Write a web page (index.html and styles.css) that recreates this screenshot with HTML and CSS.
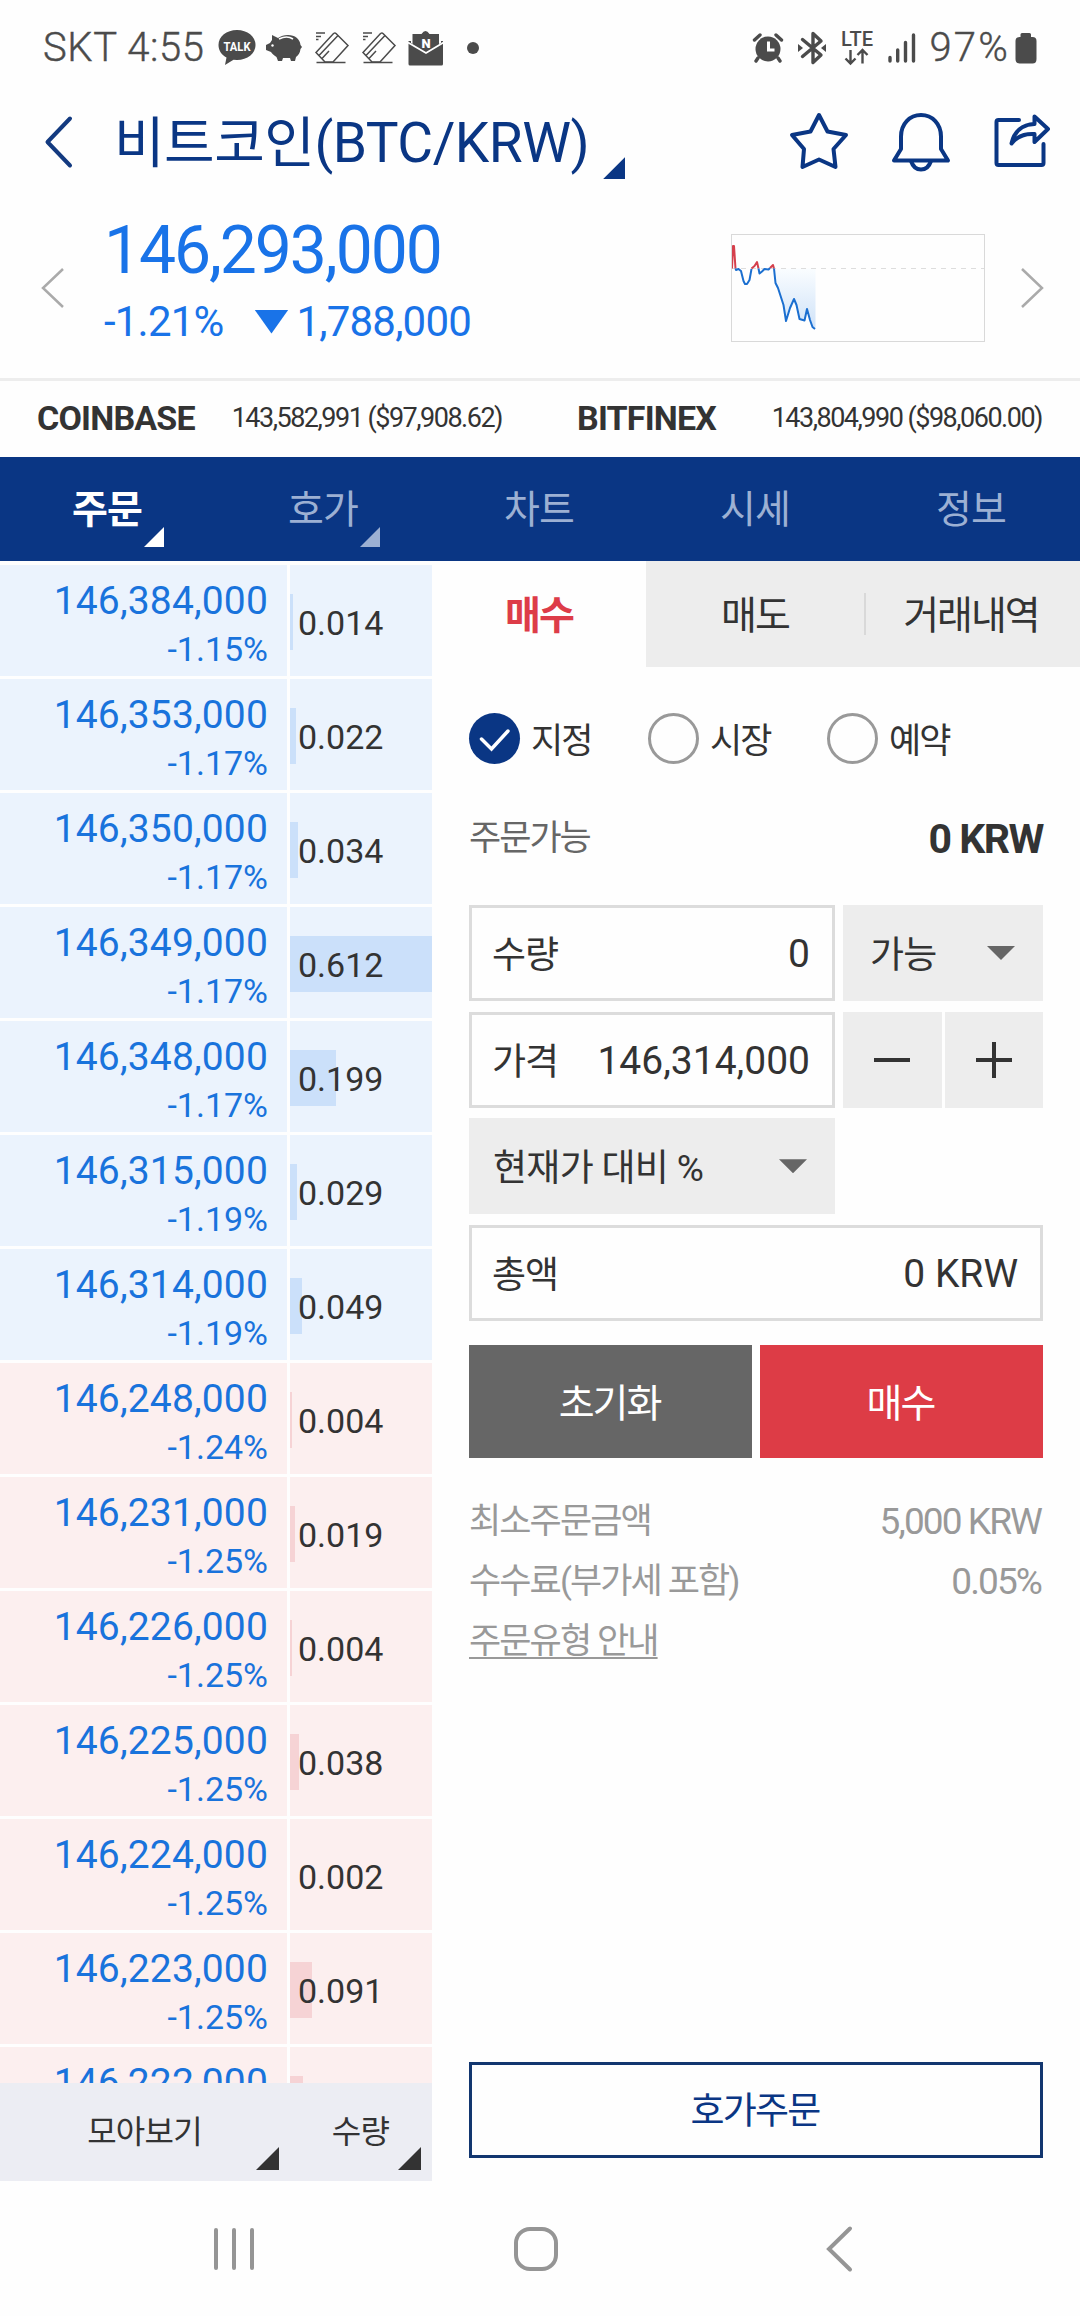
FILE: index.html
```html
<!DOCTYPE html>
<html lang="ko">
<head>
    <meta charset="utf-8">
    <title>비트코인(BTC/KRW)</title>
    <link rel="stylesheet" href="styles.css">
</head>
<body>

    <!-- Status bar -->
    <div class="status">
        <span class="carrier">SKT 4:55</span>
        <svg class="st-talk" width="38" height="36" viewBox="0 0 38 36">
            <path d="M19 0C8.500 0 .5 6.500 .5 15c0 5.500 3.300 10 8 12.600L7 35l8.500-5.300 3.500.2c10.500 0 18.500-6.500 18.500-15S29.500 0 19 0z" fill="#4b4b4b"/>
            <text x="19" y="20.500" class="talk-text" textLength="27" lengthAdjust="spacingAndGlyphs">TALK</text>
        </svg>
        <svg class="st-pig" width="38" height="28" viewBox="0 0 38 28">
            <path d="M7 1l6 3c3-2 6-3 10-3 7 0 12 4 12.500 10L37 13l-1.500 2c-.5 4-2 6-4.500 8l-1 4h-4l-1-3h-7l-1 3h-4l-1.500-4C9 21 7 20 6 18l-5-2v-5l4-2 2-3z" fill="#4b4b4b"/>
            <path d="M14 5q8-4 14 0" stroke="#fff" stroke-width="1.600" fill="none"/>
            <circle cx="7.500" cy="11.500" r="1.200" fill="#fff"/>
        </svg>
        <svg class="st-card" width="34" height="32" viewBox="0 0 34 32">
            <g fill="none" stroke="#4b4b4b" stroke-width="1.500">
                <path d="M1 1h9M1 4.500h5M1 7.500h2.500M1.500 30.500h29"/>
                <path d="M1 20.500L18.500 1.500q1.500-1 2.500 0L33 13.500 18 30h-8z"/>
                <path d="M4 23.500L23 3.500M7 26.500L14 19"/>
            </g>
        </svg>
        <svg class="st-card" width="34" height="32" viewBox="0 0 34 32">
            <g fill="none" stroke="#4b4b4b" stroke-width="1.500">
                <path d="M1 1h9M1 4.500h5M1 7.500h2.500M1.500 30.500h29"/>
                <path d="M1 20.500L18.500 1.500q1.500-1 2.500 0L33 13.500 18 30h-8z"/>
                <path d="M4 23.500L23 3.500M7 26.500L14 19"/>
            </g>
        </svg>
        <svg class="st-mail" width="36" height="36" viewBox="0 0 36 36">
            <path d="M4.500 4h9q4-6 8 0h9.500v20h-26.500z" fill="#4b4b4b"/>
            <path d="M.5 11h2.500v2l15 8.500L33 13v-2h2v23q0 1.500-1.500 1.500h-31.500q-1.500 0-1.500-1.500z" fill="#4b4b4b"/>
            <path d="M0 12.500L18 23l17.500-10.500" fill="none" stroke="#fff" stroke-width="1.800"/>
            <text x="18" y="17.500" class="mail-text">N</text>
        </svg>
        <i class="st-dot"></i>

        <div class="status-right">
            <svg width="30" height="30" viewBox="0 0 30 30">
                <circle cx="15" cy="16" r="12.500" fill="#4b4b4b"/>
                <path d="M1.500 7L7 2M28.500 7L23 2M5 25l-2 3M25 25l2 3" stroke="#4b4b4b" stroke-width="3.400" stroke-linecap="round"/>
                <path d="M15.500 8.500v8.500h6" stroke="#fff" stroke-width="3" fill="none"/>
            </svg>
            <svg class="st-bt" width="28" height="32" viewBox="0 0 28 32">
                <path d="M4.500 7.500L23 23l-8 7.500v-29L23 9 4.500 24.500" fill="none" stroke="#4b4b4b" stroke-width="3.400" stroke-linejoin="round" stroke-linecap="round"/>
                <path d="M0 12l5 4-5 4zM28 12l-5 4 5 4z" fill="#4b4b4b"/>
            </svg>
            <svg class="st-lte" width="34" height="34" viewBox="0 0 34 34">
                <text x="17" y="15" class="lte-text" textLength="32" lengthAdjust="spacingAndGlyphs">LTE</text>
                <path d="M10.500 19v13M5.500 27.500l5 5 5-5M22.500 32.500v-13M17.500 24l5-5 5 5" fill="none" stroke="#4b4b4b" stroke-width="2.400"/>
            </svg>
            <svg class="st-signal" width="28" height="30" viewBox="0 0 28 30">
                <path d="M2 24.500v3.500M9.700 17v11M17.500 9.500v18.500M25.500 2v26" stroke="#4b4b4b" stroke-width="3.400" stroke-linecap="round"/>
            </svg>
            <span class="percent">97%</span>
            <svg class="st-battery" width="22" height="31" viewBox="0 0 22 31">
                <path d="M7 0h7.500q1.500 0 1.500 1.500V4h1.500Q21.500 4 21.500 8v18q0 4.500-4 4.500H4.500q-4 0-4-4.500V8q0-4 4-4H5.500V1.500Q5.500 0 7 0z" fill="#4b4b4b"/>
            </svg>
        </div>
    </div>

    <!-- Title -->
    <div class="header">
        <svg class="back" width="30" height="54" viewBox="0 0 30 54">
            <path d="M26 3.500L3.500 27 26 50.500" fill="none" stroke="#133a80" stroke-width="4" stroke-linecap="round" stroke-linejoin="round"/>
        </svg>
        <h1 class="title">비트코인(BTC/KRW)</h1>
        <i class="corner corner-title"></i>
        <div class="header-icons">
            <svg width="60" height="60" viewBox="0 0 60 60">
                <path d="M30 4l8.500 16.500L57 24 44.500 38 46.500 56 30 48.500 13.500 56l1.500-18L3 24l18.500-3.500z" fill="none" stroke="#0a3684" stroke-width="4" stroke-linejoin="round"/>
            </svg>
            <svg width="60" height="60" viewBox="0 0 60 60">
                <path d="M10 38V25.500C10 13 18.500 4 30 4s20 9 20 21.500V38l7 11.500H3z" fill="none" stroke="#0a3684" stroke-width="4" stroke-linejoin="round"/>
                <path d="M20 50c2 6 6 8.500 10 8.500s8-2.500 10-8.500" fill="none" stroke="#0a3684" stroke-width="4"/>
            </svg>
            <svg class="share" width="60" height="60" viewBox="0 0 60 60">
                <path d="M27 9H6.500Q4.500 9 4.500 11v41q0 2 2 2h43q2 0 2-2V33" fill="none" stroke="#0a3684" stroke-width="4" stroke-linecap="round"/>
                <path d="M42.500 5.500L56 18 42.500 31v-8c-9-.5-17 1.500-23 9.500C22 21 30 13.500 42.500 13z" fill="none" stroke="#0a3684" stroke-width="4" stroke-linejoin="round"/>
            </svg>
        </div>
    </div>

    <!-- Current price -->
    <div class="ticker">
        <svg class="prev" width="22" height="40" viewBox="0 0 22 40">
            <path d="M22 1L2 20l20 19" fill="none" stroke="#aaa" stroke-width="2.500"/>
        </svg>
        <div class="price-box">
            <div class="price">146,293,000</div>
            <div class="change">
                <span class="rate">-1.21%</span>
                <i class="down"></i>
                <span class="diff">1,788,000</span>
            </div>
        </div>
        <svg class="chart" width="254" height="108" viewBox="0 0 254 108">
            <defs>
                <linearGradient id="area" x1="0" y1="0" x2="0" y2="1">
                    <stop offset="0" stop-color="#fafdff"/>
                    <stop offset="1" stop-color="#cfe2f8"/>
                </linearGradient>
            </defs>
            <path d="M43 34.500l1.500 14.500 2.500 5 5.500 17 2.500 16 4-13 4-9 2.500 6 3 14 5 1.500 2.500-11.500 3 11 2.500 7 3 2V34.500z" fill="url(#area)"/>
            <path d="M0 34.500h254" stroke="#ddd" stroke-width="1" stroke-dasharray="5 5"/>
            <g fill="none" stroke-width="2" stroke-linejoin="round">
                <path d="M1 34.500L2 12h1l1.500 22.500M20.500 34.500l3-2.500 2.500-4 1.500 6.500M39 34l3-3 1 3.500" stroke="#d5404c"/>
                <path d="M4.500 34.500l.5 1.500 2.500-1 2.500 2 2.500 10 1.500 3h2l2.500-4 2-11M27.500 34.500l1 5 2.500-2 2.500-2.500 4 .5 1.500-1.500M43 34.500l1.500 14.500 2.500 5 5.500 17 2.500 16 4-13 4-9 2.500 6 3 14 5 1.500 2.500-11.500 3 11 2.500 7 2.500 2" stroke="#1b6fd0"/>
            </g>
            <rect x=".5" y=".5" width="253" height="107" fill="none" stroke="#d9d9d9"/>
        </svg>
        <svg class="next" width="22" height="40" viewBox="0 0 22 40">
            <path d="M0 1l20 19L0 39" fill="none" stroke="#aaa" stroke-width="2.500"/>
        </svg>
    </div>

    <!-- Overseas exchanges -->
    <div class="exchanges">
        <div class="exchange">
            <b class="coinbase">COINBASE</b>
            <span>143,582,991 ($97,908.62)</span>
        </div>
        <div class="exchange">
            <b class="bitfinex">BITFINEX</b>
            <span>143,804,990 ($98,060.00)</span>
        </div>
    </div>

    <div class="tabs">
        <div class="tab on">주문<i class="corner"></i></div>
        <div class="tab">호가<i class="corner"></i></div>
        <div class="tab">차트</div>
        <div class="tab">시세</div>
        <div class="tab">정보</div>
    </div>

    <div class="main">

        <!-- Order book -->
        <div class="book">
            <div class="rows">
                <div class="row ask"><div class="cell"><p class="p">146,384,000</p><p class="r">-1.15%</p></div><div class="qty"><i class="bar" style="width:3px"></i><span>0.014</span></div></div>
                <div class="row ask"><div class="cell"><p class="p">146,353,000</p><p class="r">-1.17%</p></div><div class="qty"><i class="bar" style="width:6px"></i><span>0.022</span></div></div>
                <div class="row ask"><div class="cell"><p class="p">146,350,000</p><p class="r">-1.17%</p></div><div class="qty"><i class="bar" style="width:8px"></i><span>0.034</span></div></div>
                <div class="row ask"><div class="cell"><p class="p">146,349,000</p><p class="r">-1.17%</p></div><div class="qty"><i class="bar" style="width:142px"></i><span>0.612</span></div></div>
                <div class="row ask"><div class="cell"><p class="p">146,348,000</p><p class="r">-1.17%</p></div><div class="qty"><i class="bar" style="width:46px"></i><span>0.199</span></div></div>
                <div class="row ask"><div class="cell"><p class="p">146,315,000</p><p class="r">-1.19%</p></div><div class="qty"><i class="bar" style="width:7px"></i><span>0.029</span></div></div>
                <div class="row ask"><div class="cell"><p class="p">146,314,000</p><p class="r">-1.19%</p></div><div class="qty"><i class="bar" style="width:12px"></i><span>0.049</span></div></div>
                <div class="row bid"><div class="cell"><p class="p">146,248,000</p><p class="r">-1.24%</p></div><div class="qty"><i class="bar" style="width:2px"></i><span>0.004</span></div></div>
                <div class="row bid"><div class="cell"><p class="p">146,231,000</p><p class="r">-1.25%</p></div><div class="qty"><i class="bar" style="width:5px"></i><span>0.019</span></div></div>
                <div class="row bid"><div class="cell"><p class="p">146,226,000</p><p class="r">-1.25%</p></div><div class="qty"><i class="bar" style="width:2px"></i><span>0.004</span></div></div>
                <div class="row bid"><div class="cell"><p class="p">146,225,000</p><p class="r">-1.25%</p></div><div class="qty"><i class="bar" style="width:9px"></i><span>0.038</span></div></div>
                <div class="row bid"><div class="cell"><p class="p">146,224,000</p><p class="r">-1.25%</p></div><div class="qty"><i class="bar" style="width:0px"></i><span>0.002</span></div></div>
                <div class="row bid"><div class="cell"><p class="p">146,223,000</p><p class="r">-1.25%</p></div><div class="qty"><i class="bar" style="width:22px"></i><span>0.091</span></div></div>
                <div class="row bid"><div class="cell"><p class="p">146,222,000</p></div><div class="qty"><i class="bar" style="width:13px"></i></div></div>
            </div>
            <div class="book-foot">
                <div class="foot-cell foot-group">모아보기<i class="corner"></i></div>
                <div class="foot-cell foot-qty">수량<i class="corner"></i></div>
            </div>
        </div>

        <!-- Order form -->
        <div class="order">
            <div class="side-tabs">
                <div class="side on">매수</div>
                <div class="side sell">매도</div>
                <div class="side last">거래내역</div>
            </div>

            <div class="form">
                <div class="types">
                    <div class="type">
                        <i class="radio checked">
                            <svg width="51" height="51" viewBox="0 0 51 51"><path d="M12.500 26l10 10L39 18" fill="none" stroke="#fff" stroke-width="3.500" stroke-linecap="round"/></svg>
                        </i>
                        <span>지정</span>
                    </div>
                    <div class="type"><i class="radio"></i><span>시장</span></div>
                    <div class="type"><i class="radio"></i><span>예약</span></div>
                </div>

                <div class="avail">
                    <span>주문가능</span>
                    <b>0 KRW</b>
                </div>

                <div class="grid">
                    <div class="field"><span>수량</span><span class="val">0</span></div>
                    <div class="select sel-small">가능<i class="arrow"></i></div>
                    <div class="field"><span>가격</span><span class="val">146,314,000</span></div>
                    <div class="steps">
                        <div class="step"><svg width="38" height="38" viewBox="0 0 38 38"><path d="M1 19h36" stroke="#333" stroke-width="4"/></svg></div>
                        <div class="step"><svg width="38" height="38" viewBox="0 0 38 38"><path d="M1 19h36M19 1v36" stroke="#333" stroke-width="4"/></svg></div>
                    </div>
                    <div class="select sel-rate">현재가 대비 %<i class="arrow"></i></div>
                    <div class="field total"><span>총액</span><span class="val">0 KRW</span></div>
                </div>

                <div class="buttons">
                    <div class="btn reset">초기화</div>
                    <div class="btn buy">매수</div>
                </div>

                <div class="info"><span>최소주문금액</span><span class="val">5,000 KRW</span></div>
                <div class="info"><span>수수료(부가세 포함)</span><span class="val">0.05%</span></div>
                <div class="info"><span class="link">주문유형 안내</span></div>

                <div class="book-order">호가주문</div>
            </div>
        </div>
    </div>

    <!-- Phone navigation bar -->
    <div class="softkeys">
        <svg width="42" height="46" viewBox="0 0 42 46">
            <path d="M3 4v38M21 4v38M39 4v38" stroke="#959595" stroke-width="4" stroke-linecap="round"/>
        </svg>
        <svg class="home" width="46" height="46" viewBox="0 0 46 46">
            <rect x="3" y="3" width="40" height="40" rx="14" fill="none" stroke="#959595" stroke-width="4"/>
        </svg>
        <svg class="key-back" width="30" height="48" viewBox="0 0 30 48">
            <path d="M25 3.500L4 24l21 20.500" fill="none" stroke="#959595" stroke-width="4" stroke-linecap="round"/>
        </svg>
    </div>

</body>
</html>
```
FILE: styles.css
```css
* {
    box-sizing: border-box;
}

body {
    margin: 0;
    width: 1080px;
    height: 2316px;
    overflow: hidden;
    background: #fefefe;
    color: #333;
    font-family: Roboto, "Noto Sans CJK KR", sans-serif;
    white-space: nowrap;
}

svg, i {
    display: block;
    flex: none;
}

svg {
    overflow: visible;
}

p {
    margin: 0;
}

/* small triangle in the lower right corner */
.corner {
    width: 22px;
    height: 22px;
    background: currentColor;
    clip-path: polygon(100% 0, 100% 100%, 0 100%);
}

/* Status bar */
.status {
    display: flex;
    align-items: center;
    height: 96px;
    padding: 0 43px;
    color: #4b4b4b;
}

.carrier, .percent {
    font-size: 40px;
    line-height: 46px;
    font-weight: 300;
    -webkit-text-stroke: 0.4px #4b4b4b;
}

.carrier {
    width: 175px;
    letter-spacing: 0.6px;
}

.st-pig {
    margin-left: 9px;
}

.st-card {
    margin-left: 12px;
}

.st-card + .st-card {
    margin-left: 13px;
}

.st-mail {
    margin-left: 12px;
}

.st-dot {
    width: 12px;
    height: 12px;
    margin-left: 23px;
    border-radius: 50%;
    background: #4b4b4b;
}

.talk-text, .mail-text, .lte-text {
    font-weight: 700;
    text-anchor: middle;
}

.talk-text {
    font-size: 13px;
    fill: #fff;
}

.mail-text {
    font-size: 13px;
    font-weight: 900;
    fill: #fff;
}

.lte-text {
    font-size: 20px;
    font-weight: 500;
    fill: #4b4b4b;
}

.status-right {
    display: flex;
    align-items: center;
    margin-left: auto;
}

.st-bt {
    margin-left: 15px;
}

.st-lte, .st-signal {
    margin-left: 14px;
}

.percent {
    margin-left: 13px;
    letter-spacing: 2.2px;
}

.st-battery {
    margin-left: 5px;
}

/* Title */
.header {
    display: flex;
    align-items: center;
    height: 94px;
    padding: 0 28px 4px 44px;
    color: #0a3684;
}

.back {
    margin-top: 2px;
}

.title {
    margin: 3px 0 0 40px;
    font-size: 55px;
    line-height: 70px;
    font-weight: 400;
    letter-spacing: -0.5px;
}

.corner-title {
    margin: 54px 0 0 14px;
}

.header-icons {
    display: flex;
    gap: 42px;
    margin-left: auto;
}

.share {
    margin-left: -1px;
}

/* Current price */
.ticker {
    display: flex;
    align-items: center;
    height: 188px;
    padding: 8px 36px 0 41px;
}

.price-box {
    width: 628px;
    margin: -18px 0 0 41px;
    color: #1973e8;
}

.price {
    font-size: 66px;
    line-height: 78px;
    letter-spacing: -2.1px;
}

.change {
    display: flex;
    align-items: center;
    font-size: 42px;
    line-height: 50px;
    margin-top: 7px;
    letter-spacing: -0.8px;
}

.down {
    width: 34px;
    height: 24px;
    margin: 0 8px 0 31px;
    background: #1973e8;
    clip-path: polygon(0 0, 100% 0, 50% 100%);
}

.next {
    margin-left: 37px;
}

/* Exchanges */
.exchanges {
    display: flex;
    height: 79px;
    border-top: 3px solid #ededed;
}

.exchange {
    display: flex;
    align-items: center;
    justify-content: space-between;
    width: 540px;
    padding: 0 38px 2px 37px;
    font-size: 27px;
    letter-spacing: -1.5px;
}

.exchange b {
    font-size: 34px;
    letter-spacing: -0.8px;
}

/* Main tabs */
.tabs {
    display: flex;
    height: 104px;
    background: #0a3684;
}

.tab {
    position: relative;
    width: 216px;
    padding-right: 2px;
    text-align: center;
    font-size: 39px;
    line-height: 107px;
    letter-spacing: -1px;
    color: #9cb0d3;
}

.tab.on {
    color: #fff;
    font-weight: 700;
}

.tab .corner {
    position: absolute;
    right: 52px;
    bottom: 14px;
    width: 20px;
    height: 20px;
}

.main {
    display: flex;
    height: 1620px;
}

/* Order book */
.book {
    width: 432px;
}

.rows {
    height: 1522px;
    padding-top: 4px;
    overflow: hidden;
}

.row {
    display: flex;
    gap: 3px;
    height: 111px;
    margin-bottom: 3px;
}

.ask .cell, .ask .qty {
    background: #ebf3fd;
}

.bid .cell, .bid .qty {
    background: #fcefef;
}

.cell {
    width: 287px;
    padding: 13px 19px 0 0;
    text-align: right;
    color: #1973dc;
}

.p {
    font-size: 39px;
    line-height: 46px;
    letter-spacing: 0.15px;
}

.r {
    font-size: 34px;
    line-height: 40px;
    margin-top: 5px;
}

.qty {
    position: relative;
    width: 142px;
    padding-left: 8px;
    font-size: 34px;
    line-height: 116px;
}

.qty span {
    position: relative;
}

/* depth bar behind the quantity */
.bar {
    position: absolute;
    left: 0;
    top: 29px;
    height: 56px;
    background: #cbe0fa;
}

.bid .bar {
    background: #f6d3d5;
}

.book-foot {
    display: flex;
    height: 98px;
    background: #ecedf3;
}

.foot-cell {
    position: relative;
    text-align: center;
    font-size: 32px;
    line-height: 98px;
    letter-spacing: -0.8px;
}

.foot-group {
    width: 289px;
}

.foot-qty {
    width: 143px;
}

.foot-cell .corner {
    position: absolute;
    right: 10px;
    bottom: 11px;
    width: 23px;
    height: 23px;
}

.foot-qty .corner {
    right: 11px;
}

/* Order form */
.order {
    width: 648px;
}

.side-tabs {
    display: flex;
    height: 106px;
    background: #ededed;
}

.side {
    position: relative;
    width: 216px;
    padding-right: 2px;
    text-align: center;
    font-size: 39px;
    line-height: 111px;
    letter-spacing: -2px;
}

.side.on {
    width: 214px;
    padding: 0;
    background: #fefefe;
    color: #dd3c48;
    font-weight: 700;
}

.side.sell {
    width: 218px;
    padding: 0;
}

.side.last::before {
    content: "";
    position: absolute;
    left: 0;
    top: 32px;
    width: 2px;
    height: 42px;
    background: #d9d9d9;
}

.form {
    display: flex;
    flex-direction: column;
    height: 1514px;
    padding: 46px 37px 23px;
}

.types {
    display: flex;
}

.type {
    display: flex;
    align-items: center;
    gap: 11px;
    width: 179px;
    height: 51px;
    font-size: 35px;
    letter-spacing: -2px;
}

.type span {
    margin-top: -3px;
}

.radio {
    width: 51px;
    height: 51px;
    border: 3px solid #999;
    border-radius: 50%;
}

.radio.checked {
    border: 0;
    background: #0a3684;
}

.avail {
    display: flex;
    justify-content: space-between;
    align-items: center;
    height: 50px;
    margin-top: 50px;
    font-size: 35px;
    letter-spacing: -2px;
    color: #666;
}

.avail span {
    margin-top: -10px;
}

.avail b {
    font-size: 41px;
    letter-spacing: -1.5px;
    color: #333;
}

.grid {
    display: grid;
    grid-template-columns: 366px 200px;
    grid-auto-rows: 96px;
    gap: 10.67px 8px;
    margin-top: 41px;
}

.field {
    display: flex;
    align-items: center;
    justify-content: space-between;
    padding: 0 22px 0 20px;
    border: 3px solid #dcdcdc;
    font-size: 37px;
    letter-spacing: -1px;
}

.field span {
    margin-top: -2px;
}

.field .val {
    margin-top: 2px;
    font-size: 39px;
    letter-spacing: 0;
}

.total {
    grid-column: 1 / 3;
}

.select {
    display: flex;
    align-items: center;
    justify-content: space-between;
    padding: 0 28px 3px 24px;
    background: #ededed;
    font-size: 37px;
    letter-spacing: -0.7px;
}

.sel-rate {
    grid-column: 1;
}

.sel-small {
    padding-left: 27px;
}

.arrow {
    width: 28px;
    height: 14px;
    margin-top: 3px;
    background: #666;
    clip-path: polygon(0 0, 100% 0, 50% 100%);
}

.steps {
    display: flex;
    gap: 3px;
}

.step {
    display: flex;
    flex: 1;
    align-items: center;
    justify-content: center;
    background: #ededed;
}

.buttons {
    display: flex;
    gap: 8px;
    margin: 24px 0 34px;
}

.btn {
    flex: 1;
    height: 113px;
    padding-right: 2px;
    text-align: center;
    font-size: 39px;
    line-height: 118px;
    letter-spacing: -2px;
    color: #fff;
}

.reset {
    background: #666;
}

.buy {
    background: #dd3c46;
}

.info {
    display: flex;
    justify-content: space-between;
    padding-right: 2px;
    font-size: 35px;
    line-height: 60px;
    letter-spacing: -1.9px;
    color: #999;
}

.info .val {
    font-size: 37px;
}

.link {
    text-decoration: underline;
    text-decoration-thickness: 2px;
    text-underline-offset: 4px;
}

.book-order {
    height: 96px;
    margin-top: auto;
    padding-right: 2px;
    border: 3px solid #12366f;
    text-align: center;
    font-size: 37px;
    line-height: 94px;
    letter-spacing: -1.8px;
    color: #0a3684;
}

/* Phone navigation bar */
.softkeys {
    display: flex;
    align-items: center;
    height: 135px;
    padding-left: 213px;
}

.home {
    margin-left: 258px;
}

.key-back {
    margin-left: 266px;
}
```
